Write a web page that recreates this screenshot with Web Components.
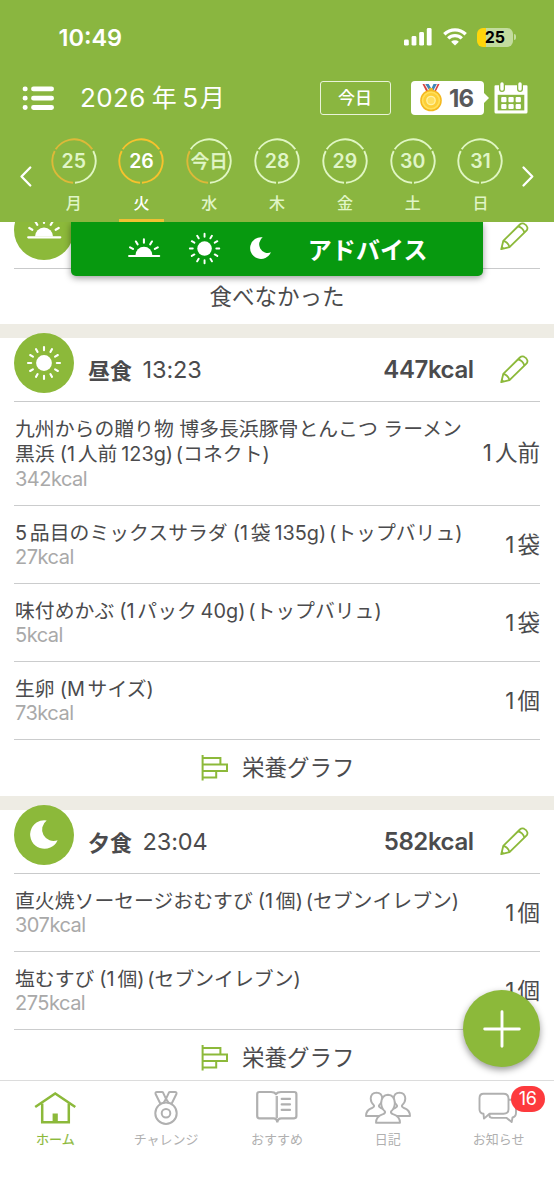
<!DOCTYPE html>
<html lang="ja">
<head>
<meta charset="utf-8">
<title>食事記録</title>
<style>
html,body{margin:0;height:100%}
body{font-family:Inter,"Noto Sans CJK JP",sans-serif;color:#4b4b4d;background:#fff;overflow:hidden;text-autospace:no-autospace}
</style>
</head>
<body>
<meal-app></meal-app>
<script>
const define=(name,html,after)=>customElements.define(name,class extends HTMLElement{
  connectedCallback(){
    if(this.shadowRoot)return;
    this.attachShadow({mode:'open'}).innerHTML=typeof html==='function'?html(this):html;
    if(after)after(this);
  }
});
const attr=(el,n,d='')=>el.getAttribute(n)??d;
// Adds the thin gaps between Japanese and Latin runs and around brackets.
const spaced=s=>s.split('|').map(line=>[...line].map((c,i,a)=>{
  const p=a[i-1]||'',cjk=x=>/[\u3040-\u9fff]/.test(x),lat=x=>/[0-9A-Za-z]/.test(x);
  let g=0;
  if(cjk(p)&&lat(c))g=.19;
  else if(lat(p)&&cjk(c))g=.14;
  else if(cjk(p)&&c==='(')g=.25;
  else if(p===')'&&c==='(')g=.14;
  return g?`<span style="margin-left:${g}em">${c}</span>`:c;
}).join('')).join('<br>');
const rays=(list,cx,cy,a,b)=>list.map(d=>{const t=d*Math.PI/180,c=Math.cos(t),s=Math.sin(t);
  return `M${(cx+a*c).toFixed(2)} ${(cy-a*s).toFixed(2)}L${(cx+b*c).toFixed(2)} ${(cy-b*s).toFixed(2)}`}).join('');

const icons={
  list:[32,24,`<g stroke="currentColor" stroke-width="4.8" stroke-linecap="round"><path d="M11.5 2.9H29.6M11.5 12.2H29.6M11.5 21.5H29.6"/><path d="M3 2.9h.3M3 12.2h.3M3 21.5h.3"/></g>`],
  signal:[29,18,`<g fill="currentColor"><rect x="0" y="11.6" width="4.8" height="6" rx="1.4"/><rect x="7.6" y="8" width="4.8" height="9.6" rx="1.4"/><rect x="15.2" y="4" width="4.8" height="13.6" rx="1.4"/><rect x="22.8" y="0" width="4.8" height="17.6" rx="1.4"/></g>`],
  wifi:[24,18,`<g fill="none" stroke="currentColor" stroke-width="3.3"><path d="M1.3 6.3C7.4.3 16.6.3 22.7 6.3"/><path d="M5.2 10.4c3.9-3.8 9.7-3.8 13.6 0"/></g><path fill="currentColor" d="M12 17.6L8.1 13.7c2.3-1.8 5.5-1.8 7.8 0z"/>`],
  calendar:[34,32,`<path fill="currentColor" d="M1.5 3.2H5V7a3 3 0 0 0 6 0V3.2H23V7a3 3 0 0 0 6 0V3.2h3.5q1 0 1 1V30q0 1.5-1.5 1.5H2Q.5 31.5.5 30V4.2q0-1 1-1z"/><path fill="currentColor" d="M6.3 2a1.7 1.7 0 0 1 3.4 0v5a1.7 1.7 0 0 1-3.4 0zM24.3 2a1.7 1.7 0 0 1 3.4 0v5a1.7 1.7 0 0 1-3.4 0z"/><path fill="#8ab640" d="M3.7 12.8H30.3V28.4H3.7z"/><g fill="currentColor"><rect x="7.2" y="15" width="5.3" height="5.2" rx="1"/><rect x="14.4" y="15" width="5.3" height="5.2" rx="1"/><rect x="21.6" y="15" width="5.3" height="5.2" rx="1"/><rect x="7.2" y="21.9" width="5.3" height="5.2" rx="1"/><rect x="14.4" y="21.9" width="5.3" height="5.2" rx="1"/><rect x="21.6" y="21.9" width="5.3" height="5.2" rx="1"/></g>`],
  medal:[24,28,`<path fill="#d8403d" d="M3.5 0h4l4.500 7-4 2zM16.500 0h4L16 9l-4-2z"/><path fill="#e9eef2" d="M5.300 0h1.200l4.500 7-1.500.5zM17.500 0h1.200L15 8l-1.500-1z"/><path fill="#3d87ba" d="M6.500 0h3.200l3.500 6h-3zM14.500 0h3.200L14 7l-2-1.500z"/><rect x="10" y="4" width="4" height="4" rx="1" fill="#eab72a"/><circle cx="12" cy="16.500" r="10.800" fill="#f4b81f"/><circle cx="12" cy="16.500" r="9.300" fill="#ffe05a"/><circle cx="12" cy="16.500" r="7.600" fill="#fdce37"/><circle cx="12" cy="16.500" r="4.200" fill="#ffdf60" stroke="#fff2a6" stroke-width="1.300"/>`],
  left:[12,21,`<path fill="none" stroke="currentColor" stroke-width="2.300" stroke-linecap="round" stroke-linejoin="round" d="M10.300 1.500L1.500 10.500l8.800 9"/>`],
  right:[12,21,`<path fill="none" stroke="currentColor" stroke-width="2.300" stroke-linecap="round" stroke-linejoin="round" d="M1.500 1.500l8.800 9-8.800 9"/>`],
  sun:[36,36,`<circle cx="18" cy="18" r="7.900" fill="currentColor"/><path fill="none" stroke="currentColor" stroke-width="2.100" stroke-linecap="round" d="${rays([0,30,60,90,120,150,180,210,240,270,300,330],18,18,12.8,16)}"/>`],
  sunrise:[36,24,`<path fill="currentColor" d="M9 19.500a9 9 0 0 1 18 0z"/><path fill="none" stroke="currentColor" stroke-width="2.200" stroke-linecap="round" d="M2.200 20.300H34.300${rays([30,60,90,120,150],18,19.5,13.5,17)}"/>`],
  moon:[28,30,`<path fill="currentColor" d="M16.700.4A14.300 14.300 0 1 0 27.600 20.200 11.400 11.400 0 0 1 16.700.4z"/>`],
  pencil:[30,30,`<g fill="none" stroke="#8cb93a" stroke-width="1.900" stroke-linejoin="round"><path d="M1.300 28.300L3.400 19.700 20.700 2.600Q22.600.9 25 1.800 27.800 3 28.500 5.600 28.900 7.600 27.500 9L9.900 26.200z"/><path d="M18.700 4.600q4.900 1.100 6.800 6.400M3.400 19.700q5 1.200 6.500 6.500"/></g><path fill="#8cb93a" d="M1.300 28.300l.8-3.500 2.600 2.700z"/>`],
  graph:[28,26,`<path fill="none" stroke="#8cb93a" stroke-width="2" d="M1.600 0V25.500M1.600 3H19.400V9.400M1.600 9.400H26V16.100H1.600M15.200 16.100V22.400H1.600"/>`],
  plus:[38,38,`<path stroke="currentColor" stroke-width="2.900" stroke-linecap="round" d="M19 1.700V36.300M1.700 19H36.300"/>`],
  home:[44,36,`<g fill="none" stroke="currentColor" stroke-width="2.500"><path d="M2.200 16L22.200 2.400 42.300 16"/><path d="M9.200 12.500V31.200H35.800V12.500"/></g><rect x="19.600" y="22.500" width="5.200" height="8.700" fill="currentColor"/>`],
  award:[44,36,`<g fill="none" stroke="currentColor" stroke-width="2" stroke-linejoin="round"><circle cx="22" cy="22.200" r="10.700"/><circle cx="22" cy="22.200" r="4.300"/><path d="M22 7.800L19.200 1.800Q18.800 1 18 1H13q-2 0-1.400 2L16.400 12.800M22 7.800L24.800 1.800Q25.200 1 26 1h5q2 0 1.400 2L27.600 12.800M19.500 12L22 7.800 24.800 12"/></g>`],
  book:[44,36,`<g fill="none" stroke="currentColor" stroke-width="2.200" stroke-linejoin="round"><path d="M22.300 31.500Q22 27.300 18.500 27.300H4.400q-2.200 0-2.200-2.200V3.200Q2.200 1 4.400 1H16q3.500 0 5 2 1.400-2 5-2H39.200q2.200 0 2.200 2.200V25.100q0 2.200-2.200 2.200H26.500Q22.600 27.300 22.300 31.500"/><path stroke-width="2.400" stroke="#b8b8b8" d="M21.800 5V27"/><path stroke-linecap="round" d="M26.700 7.900H35M26.700 13.400H35M26.700 18.900H35"/></g>`],
  people:[48,36,`<g fill="#fff" stroke="currentColor" stroke-width="1.900" stroke-linejoin="round"><path d="M2 25q0-6 6-8 2.500-1 2-2.600Q6.700 11.500 6.700 7.600 7 1.800 12.500 1.600q5.500.2 5.800 6 0 3.900-3.300 6.800-.5 1.600 2 2.600 6 2 6 8z"/><path d="M25 25q0-6 6-8 2.500-1 2-2.600-3.300-2.900-3.300-6.800.3-5.800 5.800-6 5.500.2 5.800 6 0 3.900-3.300 6.800-.5 1.600 2 2.600 6 2 6 8z"/><path d="M12 31.800q0-6.300 7-8.600 2.500-.9 2-2.700-3.800-3.100-3.800-8.400.3-8 6.800-8.300 6.500.3 6.800 8.300 0 5.300-3.800 8.400-.5 1.800 2 2.700 7 2.300 7 8.600z"/></g>`],
  chat:[44,36,`<g fill="#fff" stroke="currentColor" stroke-width="1.900" stroke-linejoin="round" transform="translate(-1.500 .8)"><path d="M14 24q0-10 6-16H36q4.500 0 4.500 4.500V21q0 4-3.500 4.700l-.8 4.600-5-4.200H18q-4 0-4-2z"/><path d="M8 2H28q5 0 5 5V17.500q0 4.500-5 4.500H14L8.500 26.800 8 22Q4 21.500 4 17.500V6.500Q4 2 8 2z"/></g>`]
};
define('ui-icon',el=>{const [w,h,b]=icons[attr(el,'name')],s=+attr(el,'scale',1);
  return `<style>:host{display:block;flex:none;line-height:0}svg{display:block;overflow:visible}</style><svg width="${w*s}" height="${h*s}" viewBox="0 0 ${w} ${h}">${b}</svg>`});

define('status-bar',`<style>
:host{display:flex;align-items:center;height:74px;box-sizing:border-box;padding:0 38px 0 58.500px;color:#fff}
time{flex:1;font-size:23.500px;font-weight:600;letter-spacing:0}
ui-icon+ui-icon{margin-left:10px}
.bat{margin-left:10.500px;width:35.500px;height:19px;border-radius:6px;background:linear-gradient(90deg,#ffd60a 26%,#c3dc9e 26%);color:#000;font:700 16px/19px Inter;text-align:center;letter-spacing:-.2px}
.tip{width:2px;height:6px;border-radius:0 2px 2px 0;background:#c3dc9e;margin-left:1.500px}
</style><time>10:49</time><ui-icon name="signal"></ui-icon><ui-icon name="wifi"></ui-icon><span class="bat">25</span><i class="tip"></i>`);

define('title-bar',`<style>
:host{display:flex;align-items:center;height:48px;box-sizing:border-box;padding:0 26.500px 0 22px;color:#fff}
h1{flex:1;margin:0 0 0 26px;font-weight:400;font-size:26px;line-height:34px;letter-spacing:.4px;white-space:nowrap}
h1 span{font-size:25px;margin:0 5px 0 6px}h1 span+span{margin:0 0 0 1.500px}
.today{box-sizing:border-box;width:71px;height:34px;border:1.500px solid #e9f3d9;border-radius:3px;text-align:center;font-size:17px;line-height:33px;font-weight:500}
.count{position:relative;display:flex;align-items:center;gap:6.500px;margin-left:20px;box-sizing:border-box;width:73px;height:34px;background:#fff;border-radius:4px;padding-left:8px;color:#59595b;font-size:24px;font-weight:700;letter-spacing:-.8px}
.count::after{content:"";position:absolute;left:100%;top:12px;border:5px solid transparent;border-left-color:#fff;border-right:0}
.cal{margin-left:10px}
</style><ui-icon name="list"></ui-icon><h1>2026<span>年</span>5<span>月</span></h1><span class="today">今日</span><span class="count"><ui-icon name="medal"></ui-icon>16</span><ui-icon class="cal" name="calendar"></ui-icon>`);

define('day-cell',el=>{
  const on=el.hasAttribute('selected'),arcs=attr(el,'arcs','www'),word=!/\d/.test(attr(el,'num'));
  const col=c=>c==='w'?'#e0f6c3':on?'#f7c22d':'#ddb939';
  return `<style>:host{display:block;width:67.800px;text-align:center;color:${on?'#fff':'#e0f5c7'}}
.ring{display:grid;height:46px;place-items:center}.ring>*{grid-area:1/1}
b{font-size:${word?18.5:19.5}px;line-height:24px;font-weight:${word?500:600};${word?'-webkit-text-stroke:.3px':''}}
.w{font-size:16px;font-weight:500;line-height:24px;margin-top:7px}
i{display:block;width:45px;height:3px;margin:4px auto 0;background:${on?'#f0c132':'transparent'}}</style>
<div class="ring"><svg width="46" height="46" fill="none" stroke-width="1.900">${[-147.5,-27.5,92.5].map((r,k)=>`<circle cx="23" cy="23" r="21.700" pathLength="360" stroke="${col(arcs[k])}" stroke-dasharray="115 245" transform="rotate(${r} 23 23)"/>`).join('')}</svg><b>${attr(el,'num')}</b></div><div class="w">${attr(el,'week')}</div><i></i>`});

define('week-strip',`<style>
:host{display:flex;height:100px;box-sizing:border-box;padding:16px 19px 0 20px;color:#fff}
.days{display:flex;flex:none;width:474.600px;margin:0 8px 0 7.800px}ui-icon{margin-top:28px}
</style><ui-icon name="left"></ui-icon><div class="days">
<day-cell num="25" week="月" arcs="owo"></day-cell><day-cell num="26" week="火" arcs="ooo" selected></day-cell><day-cell num="今日" week="水" arcs="wwo"></day-cell><day-cell num="28" week="木"></day-cell><day-cell num="29" week="金"></day-cell><day-cell num="30" week="土"></day-cell><day-cell num="31" week="日"></day-cell></div><ui-icon name="right"></ui-icon>`);

define('app-header',`<style>:host{display:block;position:relative;z-index:3;flex:none;height:222px;background:#8ab640}</style>
<status-bar></status-bar><title-bar></title-bar><week-strip></week-strip>`);

define('advice-bar',`<style>
:host{position:absolute;z-index:2;top:222px;left:71px;width:412px;height:53.500px;box-sizing:border-box;display:flex;align-items:center;padding-left:56px;background:#07990f;border-radius:0 0 5px 5px;box-shadow:0 2px 7px rgba(0,0,0,.4);color:#fff;font-size:24px;font-weight:600}
.a{margin-top:-1px}.b{margin-left:27px}.c{margin-left:29px}span{margin-left:36.500px;letter-spacing:.1px}
</style><ui-icon class="a" name="sunrise" scale=".94"></ui-icon><ui-icon class="b" name="sun" scale=".92"></ui-icon><ui-icon class="c" name="moon" scale=".76"></ui-icon><span>アドバイス</span>`);

define('food-row',el=>`<style>
:host{display:flex;align-items:center;box-sizing:border-box;margin:0 14px;padding:15px 0 12px;border-bottom:1px solid #cbcccd}
:host([tall]){padding-bottom:13px}
.t{flex:1;font-size:19.850px;line-height:25px;padding-left:1px;white-space:nowrap}
small{display:block;font-size:20px;letter-spacing:-.5px;color:#a9a9a9;margin:-1px 0 1px}
:host([tall]) small{margin:0}
.q{font-size:22.500px;line-height:30px;white-space:nowrap;margin-top:-3px}
</style><div class="t">${spaced(attr(el,'name'))}<small>${attr(el,'kcal')}kcal</small></div><div class="q">${spaced(attr(el,'qty'))}</div>`);

define('graph-link',`<style>:host{display:flex;justify-content:center;align-items:center;height:56px;gap:12.500px;padding-left:2px;font-size:22.500px;line-height:30px}</style><ui-icon name="graph"></ui-icon><span>栄養グラフ</span>`);

define('meal-section',el=>`<style>
:host{display:block;border-top:14px solid #eeece4}
header{display:flex;align-items:center;height:64px;box-sizing:border-box;margin:0 14px;border-bottom:1px solid #c9cacb;font-size:23.500px}
.disc{align-self:flex-start;margin-top:-5px;width:60px;height:60px;border-radius:50%;background:#8cb93a;color:#fff;display:grid;place-items:center}
[name=sunrise]{margin-top:-3px}
.n{margin:-2px 0 0 14px;font-size:22px;font-weight:700}.h{flex:1;margin-left:10.500px;letter-spacing:-.1px}
.k{font-size:24px;font-weight:600;letter-spacing:-.4px}.p{margin:0 11.500px 0 26px}
</style><header><div class="disc"><ui-icon name="${attr(el,'icon')}"></ui-icon></div><span class="n">${attr(el,'name')}</span><span class="h">${attr(el,'time')}</span><span class="k">${attr(el,'kcal')}</span><ui-icon class="p" name="pencil" scale=".96"></ui-icon></header><slot></slot>`);

define('meal-list',`<style>
:host{display:block;flex:1;min-height:0;overflow:hidden}
.in{margin-top:-31px}
.none{height:55px;font-size:22.500px;line-height:55px;text-align:center}
</style><div class="in"><meal-section icon="sunrise" name="朝食"><div class="none">食べなかった</div></meal-section>
<meal-section icon="sun" name="昼食" time="13:23" kcal="447kcal">
<food-row tall kcal="342" qty="1人前" name="九州からの贈り物 博多長浜豚骨とんこつ ラーメン|黒浜(1人前123g)(コネクト)"></food-row>
<food-row kcal="27" qty="1袋" name="5品目のミックスサラダ(1袋135g)(トップバリュ)"></food-row>
<food-row kcal="5" qty="1袋" name="味付めかぶ(1パック40g)(トップバリュ)"></food-row>
<food-row kcal="73" qty="1個" name="生卵(Mサイズ)"></food-row><graph-link></graph-link></meal-section>
<meal-section icon="moon" name="夕食" time="23:04" kcal="582kcal">
<food-row kcal="307" qty="1個" name="直火焼ソーセージおむすび(1個)(セブンイレブン)"></food-row>
<food-row kcal="275" qty="1個" name="塩むすび(1個)(セブンイレブン)"></food-row><graph-link></graph-link></meal-section></div>`);

define('add-button',`<style>:host{position:absolute;z-index:2;left:463px;top:990px;width:77px;height:77px;border-radius:50%;background:#8cb93a;color:#fff;display:grid;place-items:center;box-shadow:0 3px 7px rgba(0,0,0,.4)}</style><ui-icon name="plus"></ui-icon>`);

define('tab-item',el=>`<style>
:host{flex:1;position:relative;display:flex;flex-direction:column;align-items:center;padding-top:10px;font-size:13px;line-height:20px;color:${el.hasAttribute('active')?'#8cb93a':'#b0b0b0'};${el.hasAttribute('active')?'-webkit-text-stroke:.2px':''}}
span{margin-top:2px}
.bd{position:absolute;left:67.500px;top:4.500px;width:34px;height:26px;border-radius:13px;background:#fd3a3d;color:#fff;font:400 18px/26px Inter;text-align:center;margin:0;letter-spacing:-.3px}
</style><ui-icon name="${attr(el,'icon')}"></ui-icon><span><slot></slot></span>${el.hasAttribute('badge')?`<span class="bd">${attr(el,'badge')}</span>`:''}`);

define('tab-bar',`<style>:host{display:flex;flex:none;height:119px;box-sizing:border-box;border-top:1px solid #dcdcdc;background:#fff}</style>
<tab-item icon="home" active>ホーム</tab-item><tab-item icon="award">チャレンジ</tab-item><tab-item icon="book">おすすめ</tab-item><tab-item icon="people">日記</tab-item><tab-item icon="chat" badge="16">お知らせ</tab-item>`);

define('meal-app',`<style>:host{position:relative;display:flex;flex-direction:column;width:554px;height:1199px;overflow:hidden;background:#fff}</style>
<app-header></app-header><advice-bar></advice-bar><meal-list></meal-list><add-button></add-button><tab-bar></tab-bar>`);
</script>
</body>
</html>
